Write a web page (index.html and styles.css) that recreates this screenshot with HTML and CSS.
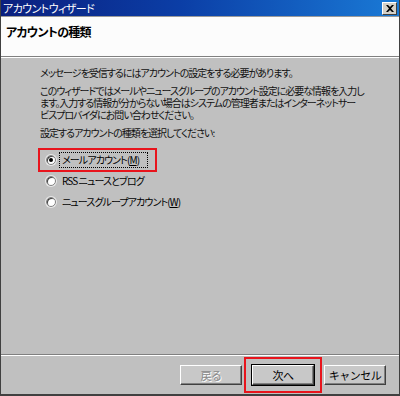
FILE: index.html
```html
<!DOCTYPE html>
<html lang="ja">
<head>
    <meta charset="UTF-8">
    <title>アカウントウィザード</title>
    <link rel="stylesheet" href="styles.css">
</head>
<body>
    <div class="window">
        <div class="titlebar">
            <span class="title">アカウントウィザード</span>
            <span class="close">
                <svg width="8" height="7" viewBox="0 0 8 7"><path d="M0 0h2l2 2 2-2h2L5 3.5 8 7H6L4 5 2 7H0l3-3.5z" fill="#000"/></svg>
            </span>
        </div>
        <div class="header">
            <h1>アカウントの種類</h1>
        </div>
        <div class="content">
            <p>メッセージを受信するにはアカウントの設定をする必要があります。</p>
            <p>このウィザードではメールやニュースグループのアカウント設定に必要な情報を入力し<br>ます。入力する情報が分からない場合はシステムの管理者またはインターネットサー<br>ビスプロバイダにお問い合わせください。</p>
            <p>設定するアカウントの種類を選択してください:</p>
            <div class="options">
                <div class="option marked">
                    <span class="radio checked"></span>
                    <span class="label focus">メールアカウント(<u>M</u>)</span>
                </div>
                <div class="option">
                    <span class="radio"></span>
                    <span class="label">RSS ニュースとブログ</span>
                </div>
                <div class="option">
                    <span class="radio"></span>
                    <span class="label">ニュースグループアカウント(<u>W</u>)</span>
                </div>
            </div>
        </div>
        <div class="footer">
            <button class="btn" disabled>戻る</button>
            <span class="mark"><button class="btn default">次へ</button></span>
            <button class="btn">キャンセル</button>
        </div>
    </div>
</body>
</html>
```

FILE: styles.css
```css
* {
    box-sizing: border-box;
    margin: 0;
    padding: 0;
}
body {
    width: 400px;
    height: 396px;
    overflow: hidden;
    font-family: "Noto Sans CJK JP", "Liberation Sans", sans-serif;
    font-size: 10px;
    font-feature-settings: "palt";
    color: #000;
}
.window {
    display: flex;
    flex-direction: column;
    width: 400px;
    height: 396px;
    background-color: #c0c0c0;
    border-left: 1px solid #404040;
    border-right: 1px solid #404040;
    border-bottom: 2px solid #404040;
}
.titlebar {
    display: flex;
    align-items: center;
    justify-content: space-between;
    height: 17px;
    padding: 0 2px 0 2px;
    background: linear-gradient(to right, #0a1f7e, #0b3ea6 45%, #1a7ad6);
    color: #fff;
    border-bottom: 1px solid #9a9a9a;
}
.title {
    font-size: 11px;
    line-height: 16px;
    letter-spacing: -0.6px;
}
.close {
    display: flex;
    align-items: center;
    justify-content: center;
    width: 15px;
    height: 13px;
    background-color: #d4d0c8;
    border: 1px solid;
    border-color: #fff #404040 #404040 #fff;
}
.header {
    height: 40px;
    background-color: #fcfcfc;
    padding: 8px 0 0 5px;
    border-bottom: 1px solid #808080;
    box-shadow: 0 1px 0 #fff;
}
.header h1 {
    font-size: 12px;
    font-weight: bold;
    line-height: 14px;
    letter-spacing: -0.7px;
}
.content {
    flex: 1;
    padding: 10px 0 0 39px;
    white-space: nowrap;
}
.content p {
    line-height: 12px;
    letter-spacing: -1px;
    margin-bottom: 6px;
    color: #111;
}
.options {
    display: flex;
    flex-direction: column;
    align-items: flex-start;
    gap: 5px;
    margin-top: 13px;
    margin-left: -2px;
}
.option {
    display: flex;
    align-items: center;
    gap: 3px;
    height: 16px;
    padding-left: 6px;
    padding-right: 7px;
    border: 2px solid transparent;
}
.option.marked {
    height: 24px;
    border-color: #e8141c;
    margin-bottom: -4px;
    margin-top: -4px;
}
.radio {
    flex-shrink: 0;
    width: 10px;
    height: 10px;
    border-radius: 50%;
    background-color: #fff;
    border: 1px solid #808080;
    box-shadow: inset 1px 1px 0 #404040, 0 0 0 1px #e8e8e8;
    display: flex;
    align-items: center;
    justify-content: center;
}
.radio.checked::after {
    content: "";
    width: 4px;
    height: 4px;
    border-radius: 50%;
    background-color: #000;
}
.label {
    padding: 1px 2px;
    line-height: 12px;
    letter-spacing: -0.9px;
    border: 1px dotted transparent;
}
.label.focus {
    padding-right: 8px;
    border-color: #000;
}
.footer {
    display: flex;
    align-items: center;
    justify-content: flex-end;
    height: 40px;
    padding-right: 13px;
    border-top: 1px solid #808080;
    box-shadow: inset 0 1px 0 #fff;
}
.btn {
    width: 62px;
    height: 20px;
    font-family: inherit;
    font-size: 11px;
    letter-spacing: -0.5px;
    background-color: #c8c8c8;
    color: #000;
    border: 1px solid;
    border-color: #fff #404040 #404040 #fff;
    box-shadow: inset -1px -1px 0 #808080;
}
.btn:disabled {
    color: #8a8a8a;
    text-shadow: 1px 1px 0 #fff;
}
.btn.default {
    outline: 1px solid #000;
}
.mark {
    display: flex;
    align-items: center;
    justify-content: center;
    width: 78px;
    height: 36px;
    margin: 0 2px;
    border: 2px solid #e8141c;
}
```
